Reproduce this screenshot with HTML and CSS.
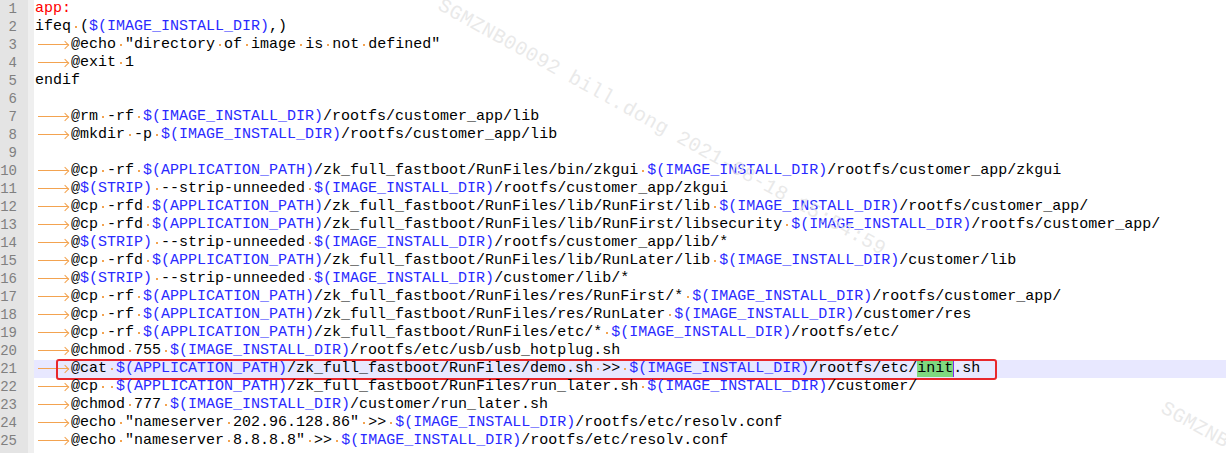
FILE: index.html
```html
<!DOCTYPE html>
<html lang="en">
<head>
    <meta charset="UTF-8">
    <meta name="viewport" content="width=device-width, initial-scale=1.0">
    <title>Makefile - Notepad++</title>
    <link rel="stylesheet" href="styles.css">
</head>
<body>
    <div class="editor">
        <div class="ln"><span class="no">1</span><span class="code"><span class="lbl">app:</span></span></div>
        <div class="ln"><span class="no">2</span><span class="code">ifeq<span class="s"> </span>(<span class="v">$(IMAGE_INSTALL_DIR)</span>,)</span></div>
        <div class="ln"><span class="no">3</span><span class="code"><span class="t"></span>@echo<span class="s"> </span>"directory<span class="s"> </span>of<span class="s"> </span>image<span class="s"> </span>is<span class="s"> </span>not<span class="s"> </span>defined"</span></div>
        <div class="ln"><span class="no">4</span><span class="code"><span class="t"></span>@exit<span class="s"> </span>1</span></div>
        <div class="ln"><span class="no">5</span><span class="code">endif</span></div>
        <div class="ln"><span class="no">6</span><span class="code"></span></div>
        <div class="ln"><span class="no">7</span><span class="code"><span class="t"></span>@rm<span class="s"> </span>-rf<span class="s"> </span><span class="v">$(IMAGE_INSTALL_DIR)</span>/rootfs/customer_app/lib</span></div>
        <div class="ln"><span class="no">8</span><span class="code"><span class="t"></span>@mkdir<span class="s"> </span>-p<span class="s"> </span><span class="v">$(IMAGE_INSTALL_DIR)</span>/rootfs/customer_app/lib</span></div>
        <div class="ln"><span class="no">9</span><span class="code"></span></div>
        <div class="ln"><span class="no">10</span><span class="code"><span class="t"></span>@cp<span class="s"> </span>-rf<span class="s"> </span><span class="v">$(APPLICATION_PATH)</span>/zk_full_fastboot/RunFiles/bin/zkgui<span class="s"> </span><span class="v">$(IMAGE_INSTALL_DIR)</span>/rootfs/customer_app/zkgui</span></div>
        <div class="ln"><span class="no">11</span><span class="code"><span class="t"></span>@<span class="v">$(STRIP)</span><span class="s"> </span>--strip-unneeded<span class="s"> </span><span class="v">$(IMAGE_INSTALL_DIR)</span>/rootfs/customer_app/zkgui</span></div>
        <div class="ln"><span class="no">12</span><span class="code"><span class="t"></span>@cp<span class="s"> </span>-rfd<span class="s"> </span><span class="v">$(APPLICATION_PATH)</span>/zk_full_fastboot/RunFiles/lib/RunFirst/lib<span class="s"> </span><span class="v">$(IMAGE_INSTALL_DIR)</span>/rootfs/customer_app/</span></div>
        <div class="ln"><span class="no">13</span><span class="code"><span class="t"></span>@cp<span class="s"> </span>-rfd<span class="s"> </span><span class="v">$(APPLICATION_PATH)</span>/zk_full_fastboot/RunFiles/lib/RunFirst/libsecurity<span class="s"> </span><span class="v">$(IMAGE_INSTALL_DIR)</span>/rootfs/customer_app/</span></div>
        <div class="ln"><span class="no">14</span><span class="code"><span class="t"></span>@<span class="v">$(STRIP)</span><span class="s"> </span>--strip-unneeded<span class="s"> </span><span class="v">$(IMAGE_INSTALL_DIR)</span>/rootfs/customer_app/lib/*</span></div>
        <div class="ln"><span class="no">15</span><span class="code"><span class="t"></span>@cp<span class="s"> </span>-rfd<span class="s"> </span><span class="v">$(APPLICATION_PATH)</span>/zk_full_fastboot/RunFiles/lib/RunLater/lib<span class="s"> </span><span class="v">$(IMAGE_INSTALL_DIR)</span>/customer/lib</span></div>
        <div class="ln"><span class="no">16</span><span class="code"><span class="t"></span>@<span class="v">$(STRIP)</span><span class="s"> </span>--strip-unneeded<span class="s"> </span><span class="v">$(IMAGE_INSTALL_DIR)</span>/customer/lib/*</span></div>
        <div class="ln"><span class="no">17</span><span class="code"><span class="t"></span>@cp<span class="s"> </span>-rf<span class="s"> </span><span class="v">$(APPLICATION_PATH)</span>/zk_full_fastboot/RunFiles/res/RunFirst/*<span class="s"> </span><span class="v">$(IMAGE_INSTALL_DIR)</span>/rootfs/customer_app/</span></div>
        <div class="ln"><span class="no">18</span><span class="code"><span class="t"></span>@cp<span class="s"> </span>-rf<span class="s"> </span><span class="v">$(APPLICATION_PATH)</span>/zk_full_fastboot/RunFiles/res/RunLater<span class="s"> </span><span class="v">$(IMAGE_INSTALL_DIR)</span>/customer/res</span></div>
        <div class="ln"><span class="no">19</span><span class="code"><span class="t"></span>@cp<span class="s"> </span>-rf<span class="s"> </span><span class="v">$(APPLICATION_PATH)</span>/zk_full_fastboot/RunFiles/etc/*<span class="s"> </span><span class="v">$(IMAGE_INSTALL_DIR)</span>/rootfs/etc/</span></div>
        <div class="ln"><span class="no">20</span><span class="code"><span class="t"></span>@chmod<span class="s"> </span>755<span class="s"> </span><span class="v">$(IMAGE_INSTALL_DIR)</span>/rootfs/etc/usb/usb_hotplug.sh</span></div>
        <div class="ln cur"><span class="no">21</span><span class="code"><span class="t"></span>@cat<span class="s"> </span><span class="v">$(APPLICATION_PATH)</span>/zk_full_fastboot/RunFiles/demo.sh<span class="s"> </span>&gt;&gt;<span class="s"> </span><span class="v">$(IMAGE_INSTALL_DIR)</span>/rootfs/etc/<span class="hl">init</span>.sh</span><span class="box"></span></div>
        <div class="ln"><span class="no">22</span><span class="code"><span class="t"></span>@cp<span class="s"> </span><span class="s"> </span><span class="v">$(APPLICATION_PATH)</span>/zk_full_fastboot/RunFiles/run_later.sh<span class="s"> </span><span class="v">$(IMAGE_INSTALL_DIR)</span>/customer/</span></div>
        <div class="ln"><span class="no">23</span><span class="code"><span class="t"></span>@chmod<span class="s"> </span>777<span class="s"> </span><span class="v">$(IMAGE_INSTALL_DIR)</span>/customer/run_later.sh</span></div>
        <div class="ln"><span class="no">24</span><span class="code"><span class="t"></span>@echo<span class="s"> </span>"nameserver<span class="s"> </span>202.96.128.86"<span class="s"> </span>&gt;&gt;<span class="s"> </span><span class="v">$(IMAGE_INSTALL_DIR)</span>/rootfs/etc/resolv.conf</span></div>
        <div class="ln"><span class="no">25</span><span class="code"><span class="t"></span>@echo<span class="s"> </span>"nameserver<span class="s"> </span>8.8.8.8"<span class="s"> </span>&gt;&gt;<span class="s"> </span><span class="v">$(IMAGE_INSTALL_DIR)</span>/rootfs/etc/resolv.conf</span></div>

        <div class="wm wm-a">SGMZNB00092 bill.dong 2021-08-18 15:54:59</div>
        <div class="wm wm-b">SGMZNB00092 bill.dong 2021-08-18 15:54:59</div>
    </div>
</body>
</html>
```

FILE: styles.css
```css
body {
    margin: 0;
    background-color: #fff;
    font-family: "Liberation Mono", "Courier New", monospace;
    font-size: 15px;
    line-height: 18px;
    color: #000;
}
.editor {
    position: relative;
    min-height: 100vh;
    overflow: hidden;
    background: linear-gradient(to right, #e4e4e4 0 28px, #efefef 28px 34px, #fff 34px);
}
.ln {
    position: relative;
    display: flex;
    height: 18px;
}
.no {
    flex: none;
    width: 28px;
    display: flex;
    justify-content: flex-end;
    padding-right: 11px;
    box-sizing: border-box;
    font-size: 14px;
    color: #808080;
}
.code {
    flex: 1;
    margin-left: 6px;
    padding-left: 1px;
    white-space: pre;
}
.cur .code {
    background-color: #e8e8ff;
}
.lbl {
    color: #ff0000;
}
.v {
    color: #2a2aff;
}
/* visible whitespace */
.s {
    background: linear-gradient(#f3a350, #f3a350) no-repeat 4px 7.5px / 2px 2px;
}
.t {
    position: relative;
    display: inline-block;
    width: 36px;
    height: 18px;
    vertical-align: top;
}
.t::before {
    content: "";
    position: absolute;
    left: 3px;
    top: 8px;
    width: 30px;
    height: 1px;
    background-color: #f3a350;
}
.t::after {
    content: "";
    position: absolute;
    left: 27px;
    top: 5.5px;
    width: 5px;
    height: 5px;
    border-top: 1px solid #f3a350;
    border-right: 1px solid #f3a350;
    transform: rotate(45deg);
}
.hl {
    background-color: #7fd97f;
    box-shadow: 1px 0 0 #7b2cf0;
}
.box {
    position: absolute;
    left: 56px;
    top: -1px;
    width: 941px;
    height: 21px;
    box-sizing: border-box;
    border: 2px solid #e8262b;
    border-radius: 3px;
}
.wm {
    position: absolute;
    transform-origin: 0 0;
    transform: rotate(29deg);
    font-size: 20px;
    line-height: 24px;
    letter-spacing: 0.4px;
    white-space: pre;
    color: rgba(228, 228, 228, 0.8);
    pointer-events: none;
}
.wm-a {
    left: 445px;
    top: -6px;
}
.wm-b {
    left: 1168px;
    top: 397px;
}
```
